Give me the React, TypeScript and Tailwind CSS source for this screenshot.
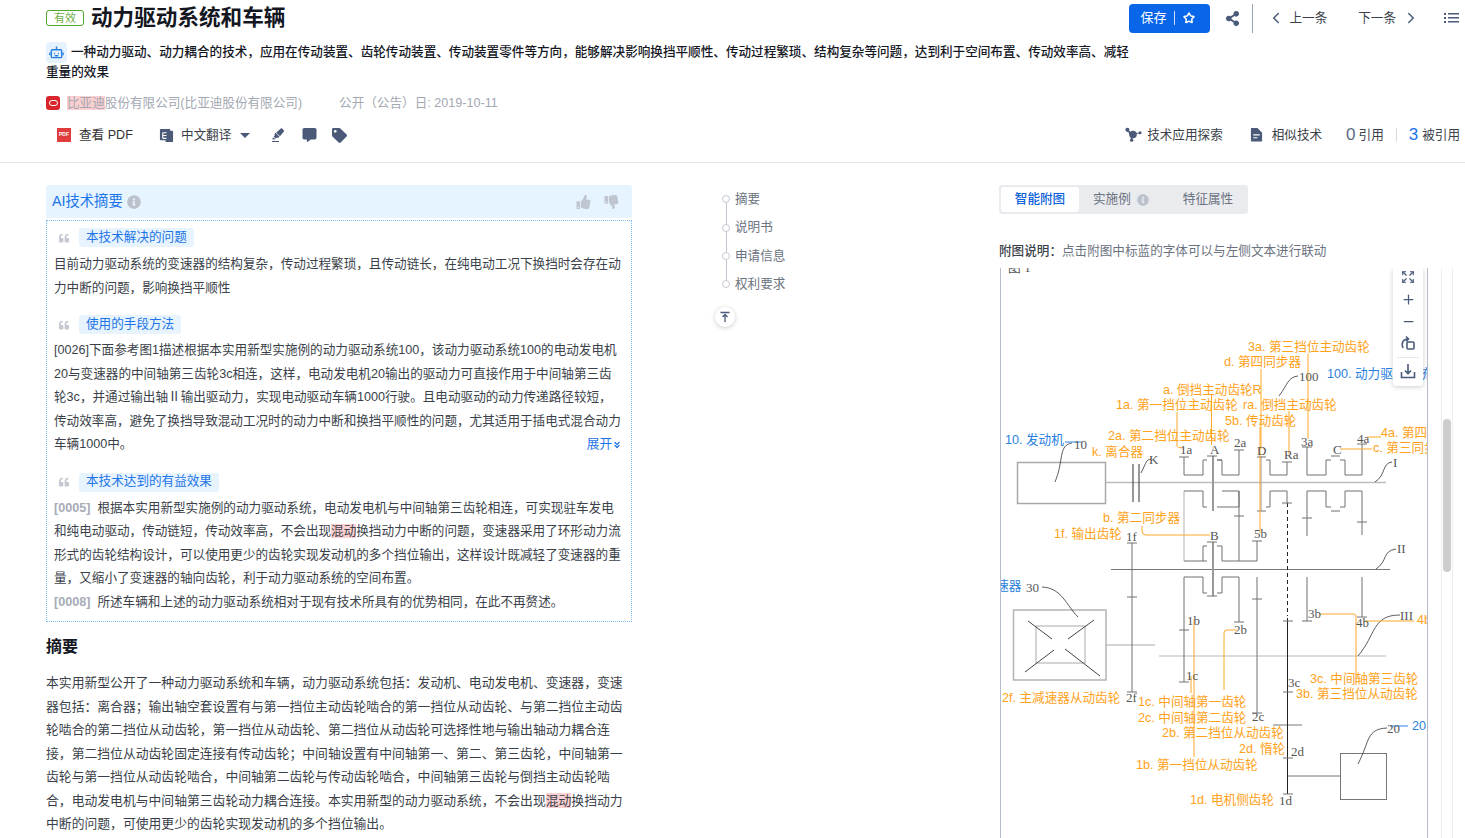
import { ChevronLeft, ChevronRight, ChevronsDown, Expand, Minus, Plus, Star } from "lucide-react";
import { FaCommentAlt, FaHighlighter, FaInfoCircle, FaQuoteLeft, FaShareAlt, FaTag, FaThumbsDown, FaThumbsUp } from "react-icons/fa";

const Mark = ({ children }: { children: string }) => <span className="bg-[#fcd0d0]">{children}</span>;

const Chip = ({ children }: { children: string }) => (
  <div className="flex items-center gap-[9px] pl-[4px]">
    <FaQuoteLeft className="h-[10px] w-[12px] text-[#c4c8d0]" />
    <span className="flex h-[19px] items-center rounded-[3px] bg-[#e8f4fd] px-[7px] text-[#1d74e8]">{children}</span>
  </div>
);

const Ref = ({ children }: { children: string }) => <span className="mr-[7px] font-bold text-[#a7acb6]">{children}</span>;

const NAV_ITEMS = ["摘要", "说明书", "申请信息", "权利要求"];

const ORANGE_LABELS: [string, number, number][] = [
  ["3a. 第三挡位主动齿轮", 1248, 352],
  ["d. 第四同步器", 1224, 367],
  ["a. 倒挡主动齿轮R", 1163, 395],
  ["1a. 第一挡位主动齿轮", 1116, 410],
  ["ra. 倒挡主动齿轮", 1243, 410],
  ["5b. 传动齿轮", 1225, 426],
  ["2a. 第二挡位主动齿轮", 1108, 441],
  ["4a. 第四同步器", 1381, 438],
  ["c. 第三同步器", 1373, 453],
  ["k. 离合器", 1092, 457],
  ["b. 第二同步器", 1103, 523],
  ["1f. 输出齿轮", 1054, 539],
  ["4b. 第四挡位", 1417, 625],
  ["3c. 中间轴第三齿轮", 1310, 684],
  ["3b. 第三挡位从动齿轮", 1296, 699],
  ["2f. 主减速器从动齿轮", 1002, 703],
  ["1c. 中间轴第一齿轮", 1138, 707],
  ["2c. 中间轴第二齿轮", 1138, 723],
  ["2b. 第二挡位从动齿轮", 1162, 738],
  ["2d. 惰轮", 1239, 754],
  ["1b. 第一挡位从动齿轮", 1136, 770],
  ["1d. 电机侧齿轮", 1190, 805],
];

const BLUE_LABELS: [string, number, number][] = [
  ["10. 发动机", 1005, 445],
  ["100. 动力驱动系统", 1327, 379],
  ["30. 主减速器", 950, 591],
  ["20. 电动发电机", 1412, 731],
];

const PART_LABELS: [string, number, number][] = [
  ["图 1", 1008, 273],
  ["100", 1299, 382],
  ["10", 1074, 450],
  ["K", 1149, 465],
  ["1a", 1180, 455],
  ["A", 1210, 455],
  ["2a", 1234, 448],
  ["D", 1257, 456],
  ["Ra", 1284, 460],
  ["3a", 1301, 447],
  ["C", 1333, 455],
  ["4a", 1357, 444],
  ["I", 1393, 468],
  ["B", 1210, 541],
  ["5b", 1254, 539],
  ["1f", 1126, 542],
  ["II", 1397, 554],
  ["30", 1026, 593],
  ["III", 1400, 621],
  ["3b", 1308, 619],
  ["4b", 1356, 628],
  ["1b", 1187, 626],
  ["2b", 1234, 635],
  ["1c", 1186, 681],
  ["3c", 1288, 688],
  ["2f", 1126, 703],
  ["2c", 1252, 722],
  ["20", 1387, 734],
  ["2d", 1291, 757],
  ["1d", 1279, 806],
];

const DARK_LINES = [
  "M1239 451V476H1222V461H1217 M1207 461H1203V476H1184V458 M1179 458H1189",
  "M1234 451H1244 M1207 457H1217 M1217 461H1222",
  "M1239 492V562 M1234 517H1244 M1222 492H1239V508H1217 M1203 492H1184 M1203 492V508H1207",
  "M1257 458H1266 M1266 461H1270V476H1287V463 M1282 463H1292 M1257 512H1266 M1266 508H1270V492H1287",
  "M1287 492V504 M1282 504H1292",
  "M1307 448V476H1326V461H1331 M1302 448H1312 M1331 457H1340 M1340 461H1345V476H1362V445 M1357 445H1367",
  "M1307 492V537 M1302 519H1312 M1326 492H1307 M1326 492V508H1331 M1331 512H1340 M1340 508H1345V492H1362V536 M1357 523H1367",
  "M1207 562H1184 M1222 562H1257V542 M1252 542H1262 M1203 547V562 M1222 547V562 M1203 547H1207 M1217 547H1222 M1207 543H1217",
  "M1132 544V693 M1127 544H1137 M1127 598H1137 M1127 693H1137",
  "M1203 578V594H1207 M1222 578V594H1217 M1207 597H1217 M1203 578H1184 M1222 578H1239V623 M1234 623H1244",
  "M1307 578V622 M1302 622H1312 M1362 578V618 M1357 618H1367",
  "M1257 578V714 M1252 600H1262 M1252 714H1262",
  "M1184 578V683 M1179 631H1189 M1179 683H1189",
  "M1283 622H1293 M1283 693H1293 M1283 759H1293 M1283 795H1293 M1288 777H1340",
];

const THIN_CURVES = [
  "M1055 483C1064 462 1058 446 1072 444",
  "M1141 474C1147 462 1146 461 1151 460",
  "M1279 397C1288 385 1288 378 1298 377",
  "M1375 483C1386 476 1382 464 1392 463",
  "M1376 570C1388 562 1382 552 1396 550",
  "M1078 618C1066 606 1062 589 1042 588",
  "M1358 657C1376 636 1372 616 1400 616",
  "M1358 765C1370 742 1366 730 1387 729",
];

const ORANGE_LINES = [
  "M1308 355V440",
  "M1261 370V450 M1260 428V534",
  "M1211.5 395V446",
  "M1177 413V447Q1177 449 1183 449",
  "M1289 412V455",
  "M1367 438H1381",
  "M1340 450H1372",
  "M1142 527V532Q1142 536 1146 536H1210",
  "M1194 620V758",
  "M1191 677V694",
  "M1224 691V634Q1224 631 1227 631H1237",
  "M1320 615H1354Q1356 615 1356 618V686",
  "M1363 622H1414",
];

const Drawing = () => (
  <svg viewBox="1001 269 427 569" className="h-[569px] w-[427px]" fill="none" style={{ fontFamily: '"Liberation Sans", "Noto Sans CJK SC", sans-serif' }}>
    <rect x="1017.5" y="463.5" width="88" height="41" stroke="#a8a8a8" strokeWidth="1.5" />
    <path d="M1106 483.5H1386" stroke="#bdbdbd" strokeWidth="1.5" />
    <path d="M1133 465V503M1139 465V503" stroke="#333" />
    <path d="M1111 570.5H1390" stroke="#777" />
    <path d="M1159 657H1386" stroke="#dcdcdc" strokeWidth="2" />
    <path d="M1106 646H1155" stroke="#c4c4c4" strokeWidth="1.5" />
    <rect x="1013.5" y="611" width="92.5" height="70" stroke="#b4b4b4" strokeWidth="1.5" />
    <rect x="1036" y="627" width="49" height="37" stroke="#aaa" />
    <path d="M1028 622L1052 640M1094 621L1068 640M1054 651L1025 673M1065 650L1100 677" stroke="#444" />
    <rect x="1340.5" y="754.5" width="46" height="46" stroke="#777" />
    <path d="M1273 726H1302" stroke="#bbb" strokeWidth="2" />
    <path d="M1213 457V512 M1213 543V597" stroke="#999" strokeWidth="2" />
    <path d="M1261 457V512" stroke="#999" />
    <path d="M1287.5 504V617" stroke="#222" strokeDasharray="4 3" />
    <path d="M1287.5 619V795" stroke="#222" />
    <path d="M1184 492V562" stroke="#ccc" strokeWidth="1.5" />
    {DARK_LINES.map((d) => (
      <path key={d} d={d} stroke="#707070" />
    ))}
    {THIN_CURVES.map((d) => (
      <path key={d} d={d} stroke="#333" strokeWidth="0.8" />
    ))}
    {ORANGE_LINES.map((d) => (
      <path key={d} d={d} stroke="#ffa726" />
    ))}
    <path d="M1065 443H1082M1390 727H1408" stroke="#2a80de" />
    {PART_LABELS.map(([text, x, y]) => (
      <text key={text} x={x} y={y} fill="#555" fontSize="13" fontFamily='"Liberation Serif", serif'>
        {text}
      </text>
    ))}
    {ORANGE_LABELS.map(([text, x, y]) => (
      <text key={text} x={x} y={y} fill="#ffa21a" fontSize="12.6">
        {text}
      </text>
    ))}
    {BLUE_LABELS.map(([text, x, y]) => (
      <text key={text} x={x} y={y} fill="#2a80de" fontSize="12.6">
        {text}
      </text>
    ))}
  </svg>
);

const App = () => {
  return (
    <div className="flex h-[838px] w-[1465px] flex-col overflow-hidden bg-white text-[12.6px] text-[#3a3f4a]" style={{ fontFamily: '"Liberation Sans", "Noto Sans CJK SC", sans-serif' }}>
      <header className="h-[163px] shrink-0 border-b border-[#e2e3ea] pl-[46px]">
        <div className="flex h-[36px] items-center">
          <span className="flex h-[16px] w-[38px] items-center justify-center rounded-[3px] border border-[#52a62c] text-[11px] text-[#6fae4a]">有效</span>
          <h1 className="ml-[7px] text-[21.6px] font-bold text-[#14171f]">动力驱动系统和车辆</h1>
          <div className="ml-auto flex items-center pr-[5px]">
            <button className="flex h-[29px] w-[81px] items-center rounded-[4px] bg-[#0a66e8] pl-[11px] text-[13px] text-white">
              保存
              <span className="mx-[8px] h-[14px] w-px bg-white/80" />
              <Star className="h-[12px] w-[12px]" strokeWidth={3} />
            </button>
            <FaShareAlt className="ml-[15px] h-[15px] w-[15px] text-[#4a5a78]" />
            <span className="ml-[12px] h-[29px] w-px bg-[#9aa3b5]" />
            <ChevronLeft className="ml-[14px] h-[18px] w-[18px] text-[#4a5a78]" />
            <span className="ml-[4px]">上一条</span>
            <span className="ml-[31px]">下一条</span>
            <ChevronRight className="ml-[6px] h-[18px] w-[18px] text-[#4a5a78]" />
            <svg viewBox="0 0 16 12" className="ml-[24px] h-[12px] w-[16px]" fill="#4a5a78">
              <rect x="0" y="1" width="2" height="2" />
              <rect x="0" y="5" width="2" height="2" />
              <rect x="0" y="9" width="2" height="2" />
              <rect x="4" y="1" width="11" height="1.5" />
              <rect x="4" y="5" width="11" height="1.5" />
              <rect x="4" y="9" width="11" height="1.5" />
            </svg>
          </div>
        </div>
        <div className="mt-[5px] w-[1090px] text-[12.6px] font-medium leading-[19px] text-[#14171f]">
          <div className="flex h-[22px] items-center whitespace-nowrap">
            <span className="mr-[4px] flex h-[21px] w-[21px] items-center justify-center rounded-[4px] bg-[#e6f2fd]">
              <svg viewBox="0 0 16 16" className="h-[15px] w-[15px]" fill="none" stroke="#2a80de" strokeWidth="1.5">
                <rect x="2.5" y="5" width="11" height="8.5" rx="1" />
                <path d="M8 1.5V5M5.5 9H6.5M9.5 9H10.5M6 11.5H10M1 8V11M15 8V11" />
              </svg>
            </span>
            一种动力驱动、动力耦合的技术，应用在传动装置、齿轮传动装置、传动装置零件等方向，能够解决影响换挡平顺性、传动过程繁琐、结构复杂等问题，达到利于空间布置、传动效率高、减轻
          </div>
          <div>重量的效果</div>
        </div>
        <div className="mt-[10px] flex h-[22px] items-center text-[#a3a8b2]">
          <span className="flex h-[14px] w-[14px] items-center justify-center rounded-[3px] bg-[#d8262c]">
            <span className="h-[6px] w-[9px] rounded-[3px] border border-white" />
          </span>
          <span className="ml-[7px]">
            <Mark>比亚迪</Mark>股份有限公司(比亚迪股份有限公司)
          </span>
          <span className="ml-[37px]">公开（公告）日: 2019-10-11</span>
        </div>
        <div className="mt-[9px] flex h-[24px] items-center pr-[5px]">
          <span className="ml-[11px] flex h-[14px] w-[14px] items-center justify-center bg-[#e03c3c] text-[5px] font-bold text-white">PDF</span>
          <span className="ml-[8px] text-[#333]">查看 PDF</span>
          <svg viewBox="0 0 16 16" className="ml-[26px] h-[15px] w-[15px]">
            <path d="M1 2a1 1 0 0 1 1-1h9a1 1 0 0 1 1 1v1h2a1 1 0 0 1 1 1v10a1 1 0 0 1-1 1H7v-2H2a1 1 0 0 1-1-1z" fill="#4a5a78" />
            <path d="M4 5H8M4 8H8M4 11H8M4 5V11" stroke="#fff" strokeWidth="1.2" fill="none" />
          </svg>
          <span className="ml-[7px]">中文翻译</span>
          <span className="ml-[9px] h-0 w-0 border-x-[5px] border-t-[5px] border-x-transparent border-t-[#4a5a78]" />
          <div className="ml-[22px] flex flex-col items-center">
            <FaHighlighter className="h-[12px] w-[12px] text-[#4a5a78]" />
            <span className="mt-[1px] ml-[-6px] h-[1.5px] w-[7px] bg-[#4a5a78]" />
          </div>
          <FaCommentAlt className="ml-[18px] h-[14px] w-[15px] text-[#4a5a78]" />
          <FaTag className="ml-[15px] h-[15px] w-[15px] text-[#4a5a78]" />
          <div className="ml-auto flex items-center">
            <svg viewBox="0 0 18 16" className="h-[15px] w-[17px]" fill="#4a5a78">
              <circle cx="8.5" cy="8" r="4" />
              <circle cx="2.5" cy="3" r="2.2" />
              <circle cx="7" cy="14" r="1.8" />
              <circle cx="16" cy="6" r="1.6" />
              <path d="M2.5 3L8.5 8L7 14M8.5 8L16 6" stroke="#4a5a78" />
            </svg>
            <span className="ml-[5px]">技术应用探索</span>
            <svg viewBox="0 0 14 16" className="ml-[27px] h-[15px] w-[13px]" fill="#4a5a78">
              <path d="M1 1.5A.5.5 0 0 1 1.5 1H8L13 6V15A.5.5 0 0 1 12.5 15.5H1.5A.5.5 0 0 1 1 15Z" />
              <path d="M3.5 8.5H10.5M3.5 11.5H8" stroke="#fff" strokeWidth="1.3" />
            </svg>
            <span className="ml-[9px]">相似技术</span>
            <span className="ml-[24px] text-[17px] leading-none text-[#5c6a85]">0</span>
            <span className="ml-[3px]">引用</span>
            <span className="ml-[12px] h-[14px] w-px bg-[#d6d9e0]" />
            <span className="ml-[12px] text-[17px] leading-none text-[#1d74e8]">3</span>
            <span className="ml-[4px]">被引用</span>
          </div>
        </div>
      </header>

      <main className="flex min-h-0 flex-1 pl-[46px] pt-[22px]">
        <section className="w-[586px] shrink-0">
          <div className="flex h-[33px] items-center rounded-t-[3px] bg-[#e6f4ff] px-[6px] mb-[2px]">
            <span className="text-[14.3px] text-[#1d74e8]">AI技术摘要</span>
            <FaInfoCircle className="ml-[4px] h-[14px] w-[14px] text-[#bcc2cc]" />
            <FaThumbsUp className="ml-auto h-[14px] w-[15px] text-[#c0c6d0]" />
            <FaThumbsDown className="ml-[13px] mr-[7px] h-[14px] w-[15px] text-[#c0c6d0]" />
          </div>
          <div className="h-[402px] border border-dotted border-[#7cbcf0] pl-[7px] pt-[7px] leading-[23.5px] whitespace-nowrap">
            <Chip>本技术解决的问题</Chip>
            <p className="mt-[6px]">目前动力驱动系统的变速器的结构复杂，传动过程繁琐，且传动链长，在纯电动工况下换挡时会存在动</p>
            <p>力中断的问题，影响换挡平顺性</p>
            <div className="mt-[15px]">
              <Chip>使用的手段方法</Chip>
            </div>
            <p className="mt-[5px]">[0026]下面参考图1描述根据本实用新型实施例的动力驱动系统100，该动力驱动系统100的电动发电机</p>
            <p>20与变速器的中间轴第三齿轮3c相连，这样，电动发电机20输出的驱动力可直接作用于中间轴第三齿</p>
            <p>轮3c，并通过输出轴Ⅱ输出驱动力，实现电动驱动车辆1000行驶。且电动驱动的动力传递路径较短，</p>
            <p>传动效率高，避免了换挡导致混动工况时的动力中断和换挡平顺性的问题，尤其适用于插电式混合动力</p>
            <p className="flex justify-between pr-[9px]">
              <span>车辆1000中。</span>
              <span className="flex items-center text-[#1d74e8]">
                展开
                <ChevronsDown className="h-[10px] w-[10px]" strokeWidth={3} />
              </span>
            </p>
            <div className="mt-[16px]">
              <Chip>本技术达到的有益效果</Chip>
            </div>
            <p className="mt-[5px]">
              <Ref>[0005]</Ref>根据本实用新型实施例的动力驱动系统，电动发电机与中间轴第三齿轮相连，可实现驻车发电
            </p>
            <p>
              和纯电动驱动，传动链短，传动效率高，不会出现<Mark>混动</Mark>换挡动力中断的问题，变速器采用了环形动力流
            </p>
            <p>形式的齿轮结构设计，可以使用更少的齿轮实现发动机的多个挡位输出，这样设计既减轻了变速器的重</p>
            <p>量，又缩小了变速器的轴向齿轮，利于动力驱动系统的空间布置。</p>
            <p>
              <Ref>[0008]</Ref>所述车辆和上述的动力驱动系统相对于现有技术所具有的优势相同，在此不再赘述。
            </p>
          </div>
          <h2 className="mt-[14px] text-[16px] font-bold leading-[22px] text-[#14171f]">摘要</h2>
          <div className="mt-[13px] text-[12.82px] leading-[23.5px] whitespace-nowrap">
            <p>本实用新型公开了一种动力驱动系统和车辆，动力驱动系统包括：发动机、电动发电机、变速器，变速</p>
            <p>器包括：离合器；输出轴空套设置有与第一挡位主动齿轮啮合的第一挡位从动齿轮、与第二挡位主动齿</p>
            <p>轮啮合的第二挡位从动齿轮，第一挡位从动齿轮、第二挡位从动齿轮可选择性地与输出轴动力耦合连</p>
            <p>接，第二挡位从动齿轮固定连接有传动齿轮；中间轴设置有中间轴第一、第二、第三齿轮，中间轴第一</p>
            <p>齿轮与第一挡位从动齿轮啮合，中间轴第二齿轮与传动齿轮啮合，中间轴第三齿轮与倒挡主动齿轮啮</p>
            <p>
              合，电动发电机与中间轴第三齿轮动力耦合连接。本实用新型的动力驱动系统，不会出现<Mark>混动</Mark>换挡动力
            </p>
            <p>中断的问题，可使用更少的齿轮实现发动机的多个挡位输出。</p>
          </div>
        </section>

        <nav className="ml-[90px] w-[277px] shrink-0 text-[#6b7280]">
          <div className="relative">
            <span className="absolute left-[3.5px] top-[12px] h-[85px] w-px bg-[#c5c9d2]" />
            {NAV_ITEMS.map((item) => (
              <div key={item} className="relative flex h-[28.4px] items-center">
                <span className="h-[8px] w-[8px] rounded-full border border-[#c5c9d2] bg-white" />
                <span className="ml-[5px]">{item}</span>
              </div>
            ))}
          </div>
          <button className="ml-[-7px] mt-[8px] flex h-[20px] w-[20px] items-center justify-center rounded-full bg-white shadow-[0_1px_5px_rgba(0,0,0,0.2)]">
            <svg viewBox="0 0 12 12" className="h-[12px] w-[12px]" fill="none" stroke="#4a5a78" strokeWidth="1.3">
              <path d="M1.5 1.5H10.5M6 11V4M3.5 6L6 3.5L8.5 6" />
            </svg>
          </button>
        </nav>

        <section className="flex min-w-0 flex-1 flex-col">
          <div className="flex h-[29px] w-[249px] items-center rounded-[3px] bg-[#e9ebef] p-[2px] text-[#6b7280]">
            <span className="flex h-[25px] w-[78px] items-center justify-center rounded-[3px] bg-white font-medium text-[#0a5fd8]">智能附图</span>
            <span className="ml-[14px]">实施例</span>
            <FaInfoCircle className="ml-[6px] h-[12px] w-[12px] text-[#bcc2cc]" />
            <span className="ml-[34px]">特征属性</span>
          </div>
          <p className="mt-[27px] leading-[20px] text-[#6b7280]">
            <span className="font-medium text-[#3a3f4a]">附图说明：</span>点击附图中标蓝的字体可以与左侧文本进行联动
          </p>
          <div className="mt-[7px] flex min-h-0 flex-1">
            <div className="relative ml-px w-[428px] shrink-0 overflow-hidden border-x border-[#b4bccb]">
              <Drawing />
              <div className="absolute left-[392px] top-0 flex h-[118px] w-[30px] flex-col items-center rounded-b-[3px] bg-white pt-[2px] text-[#4a5a78] shadow-[0_1px_5px_rgba(0,0,0,0.2)]">
                <Expand className="h-[14px] w-[14px]" strokeWidth={2} />
                <Plus className="mt-[8px] h-[15px] w-[15px]" strokeWidth={2} />
                <Minus className="mt-[7px] h-[15px] w-[15px]" strokeWidth={2} />
                <svg viewBox="0 0 16 16" className="mt-[6px] h-[16px] w-[16px]" fill="none" stroke="#4a5a78" strokeWidth="1.6">
                  <rect x="7" y="7" width="7" height="7" rx="1" />
                  <path d="M3 13C1 8 3 4 8 4M6 1.5L8.5 4L6 6.5" />
                </svg>
                <span className="mt-[6px] h-px w-[22px] bg-[#e4e6ea]" />
                <svg viewBox="0 0 16 16" className="mt-[5px] h-[16px] w-[16px]" fill="none" stroke="#4a5a78" strokeWidth="1.6">
                  <path d="M1.5 9V14.5H14.5V9M8 1V10M5 7.5L8 10.5L11 7.5" />
                </svg>
              </div>
            </div>
            <div className="ml-[13px] w-[12px] shrink-0 border-x border-[#eceef1] pl-px pt-[151px]">
              <div className="h-[153px] w-[8px] rounded-[4px] bg-[#cdcdcd]" />
            </div>
          </div>
        </section>
      </main>
    </div>
  );
};

export default App;
